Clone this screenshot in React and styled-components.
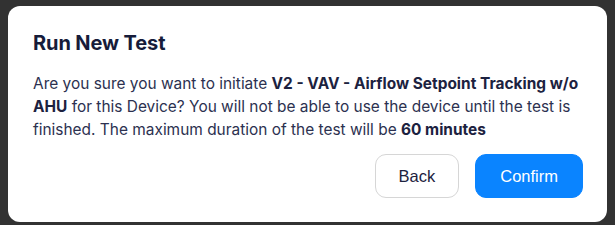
import React from 'react';
import styled, { createGlobalStyle } from 'styled-components';

const GlobalStyle = createGlobalStyle`
    html, body {
        margin: 0;
        padding: 0;
        background: #323232;
    }
`

const Backdrop = styled.div`
    width: 615px;
    height: 225px;
    background: #323232;
    padding: 6px 8px 0 8px;
    box-sizing: border-box;
`

const Dialog = styled.div`
    width: 599px;
    height: 216px;
    box-sizing: border-box;
    background: #ffffff;
    border-radius: 12px;
    padding: 24px 24px 24px 25px;
    display: flex;
    flex-direction: column;
`

const Title = styled.h2`
    margin: 0;
    font-family: Inter, "Noto Sans", sans-serif;
    font-size: 20px;
    line-height: 26px;
    font-weight: 700;
    color: #161c3a;
    letter-spacing: -0.1px;
`

const Message = styled.p`
    margin: 16px -4px 0 0;
    font-family: Inter, "Noto Sans", sans-serif;
    font-size: 15.45px;
    line-height: 23px;
    color: #2c3150;
    letter-spacing: 0;

    b {
        font-weight: 700;
        color: #1c2240;
    }
`

const Actions = styled.div`
    margin-top: auto;
    display: flex;
    justify-content: flex-end;
    gap: 16px;
`

const Button = styled.button`
    height: 44px;
    padding: 0 ${(p) => (p.$primary ? '24px' : '23px')};
    border-radius: 11px;
    font-family: "Liberation Sans", Arial, sans-serif;
    font-size: 16.5px;
    cursor: pointer;
    border: 1px solid ${(p) => (p.$primary ? '#0a84ff' : '#d6d6d6')};
    background: ${(p) => (p.$primary ? '#0a84ff' : '#ffffff')};
    color: ${(p) => (p.$primary ? '#ffffff' : '#1c2240')};
`

const App = () => {
    return (
        <>
            <GlobalStyle />
            <Backdrop>
                <Dialog>
                    <Title>Run New Test</Title>
                    <Message>
                        Are you sure you want to initiate <b>V2 - VAV - Airflow Setpoint Tracking w/o AHU</b> for
                        this Device? You will not be able to use the device until the test is finished. The
                        maximum duration of the test will be <b>60 minutes</b>
                    </Message>
                    <Actions>
                        <Button>Back</Button>
                        <Button $primary>Confirm</Button>
                    </Actions>
                </Dialog>
            </Backdrop>
        </>
    )
}

export default App
